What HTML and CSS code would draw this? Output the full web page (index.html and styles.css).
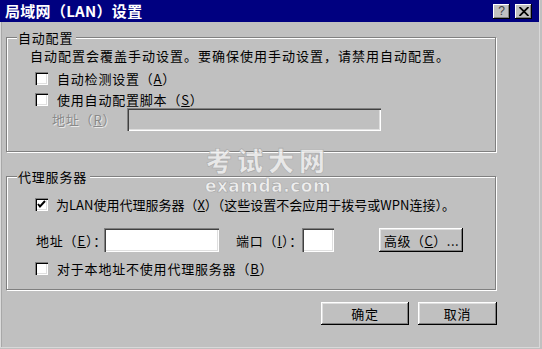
FILE: index.html
```html
<!DOCTYPE html>
<html lang="zh-CN">
<head>
<meta charset="utf-8">
<title>局域网（LAN）设置</title>
<link rel="stylesheet" href="styles.css">
</head>
<body>
<div class="window">
  <div class="titlebar">
    <span class="title">局域网（LAN）设置</span>
    <div class="tbtns">
      <span class="tbtn help">?</span>
      <span class="tbtn close">
        <svg width="10" height="9" viewBox="0 0 10 9"><path d="M0.5 0 L9.5 9 M9.5 0 L0.5 9" stroke="#000" stroke-width="1.8" fill="none"/></svg>
      </span>
    </div>
  </div>
  <div class="content">
    <div class="group g1">
      <span class="legend">自动配置</span>
      <div class="row desc">自动配置会覆盖手动设置。要确保使用手动设置，请禁用自动配置。</div>
      <div class="row cb1"><span class="cb"></span><span class="lbl">自动检测设置（<u>A</u>）</span></div>
      <div class="row cb2"><span class="cb"></span><span class="lbl">使用自动配置脚本（<u>S</u>）</span></div>
      <div class="row addr1"><span class="dis">地址（<u>R</u>）</span><span class="field disabled"></span></div>
    </div>
    <div class="group g2">
      <span class="legend">代理服务器</span>
      <div class="row cbx"><span class="cb checked"><svg width="9" height="9" viewBox="0 0 9 9"><path d="M1 4 L3 6.5 L8 1" stroke="#000" stroke-width="2" fill="none"/></svg></span><span class="lbl">为LAN使用代理服务器（<u>X</u>）（这些设置不会应用于拨号或WPN连接）。</span></div>
      <div class="row addr2">
        <span class="l1">地址（<u>E</u>）：</span><span class="field f-addr"></span>
        <span class="l2">端口（<u>I</u>）：</span><span class="field f-port"></span>
        <span class="btn adv">高级（<u>C</u>）...</span>
      </div>
      <div class="row cb3"><span class="cb"></span><span class="lbl">对于本地址不使用代理服务器（<u>B</u>）</span></div>
    </div>
    <div class="buttons">
      <span class="btn ok">确定</span>
      <span class="btn cancel">取消</span>
    </div>
  </div>
  <div class="watermark">
    <span class="wm1">考试大网</span>
    <span class="wm2">examda.com</span>
  </div>
</div>
</body>
</html>
```
FILE: styles.css
```css
html, body {
  margin: 0;
  padding: 0;
  background: #c0c0c0;
}
body {
  width: 542px;
  height: 349px;
  overflow: hidden;
  font-family: "Noto Sans CJK SC", "DejaVu Sans", sans-serif;
  font-size: 13px;
  color: #000;
}
.window {
  position: relative;
  width: 540px;
  height: 348px;
  box-sizing: border-box;
  background: #c0c0c0;
  border-right: 1px solid #d8d8d8;
  border-bottom: 1px solid #d8d8d8;
  box-shadow: inset 1px 0 0 #dcdcdc, inset 2px 0 0 #a8a8a8;
  display: flex;
  flex-direction: column;
}
.titlebar {
  height: 22px;
  background: #000080;
  display: flex;
  align-items: center;
  justify-content: space-between;
  padding: 0 7px 0 5px;
}
.title {
  color: #fff;
  font-weight: bold;
  font-size: 15px;
  letter-spacing: 0.3px;
  line-height: 22px;
}
.tbtns {
  display: flex;
  gap: 5px;
  align-items: center;
}
.tbtn {
  width: 17px;
  height: 15px;
  background: #c0c0c0;
  box-sizing: border-box;
  box-shadow: inset -1px -1px 0 #000, inset 1px 1px 0 #fff, inset -2px -2px 0 #808080;
  display: flex;
  align-items: center;
  justify-content: center;
  font-family: "Liberation Sans", sans-serif;
  font-size: 12px;
  line-height: 15px;
  color: #404040;
}
.content {
  padding: 15px 0 0 6px;
  display: flex;
  flex-direction: column;
}
.group {
  width: 490px;
  box-sizing: border-box;
  border: 1px solid #808080;
  box-shadow: 1px 1px 0 #fff, inset 1px 1px 0 #fff;
  display: flex;
  flex-direction: column;
  letter-spacing: 0.8px;
}
.g1 { height: 115px; }
.g2 { height: 114px; margin-top: 24px; }
.legend {
  align-self: flex-start;
  margin: -8px 0 0 10px;
  padding: 0 3px 0 1px;
  line-height: 15px;
  background: #c0c0c0;
}
.row {
  display: flex;
  align-items: center;
  height: 20px;
  white-space: nowrap;
}
.desc { padding-left: 23px; letter-spacing: 1px; }
.cb1 { margin-top: 3px; }
.cb2 { margin-top: 1px; }
.cb1, .cb2, .cbx, .cb3 { padding-left: 28px; }
.cb {
  width: 13px;
  height: 13px;
  box-sizing: border-box;
  background: #fff;
  box-shadow: inset 1px 1px 0 #808080, inset 2px 2px 0 #000, inset -1px -1px 0 #fff, inset -2px -2px 0 #dfdfdf;
  display: flex;
  align-items: center;
  justify-content: center;
  flex: none;
}
.lbl { margin-left: 9px; line-height: 15px; }
.addr1 {
  height: 23px;
  margin-top: -1px;
  padding-left: 45px;
}
.dis {
  color: #8a8a8a;
  text-shadow: 1px 1px 0 #e8e8e8;
  width: 75px;
}
.field {
  height: 23px;
  box-sizing: border-box;
  background: #fff;
  box-shadow: inset 1px 1px 0 #808080, inset 2px 2px 0 #404040, inset -1px -1px 0 #fff, inset -2px -2px 0 #dfdfdf;
  flex: none;
}
.field.disabled {
  width: 254px;
  background: #c0c0c0;
}
.cbx { margin-top: 10px; }
.cbx .lbl { margin-left: 8px; letter-spacing: 0px; }
.addr2 {
  height: 24px;
  margin-top: 14px;
  padding-left: 29px;
}
.addr2 .field { height: 24px; }
.l1 { width: 68px; }
.f-addr { width: 115px; }
.l2 { margin-left: 17px; width: 66px; }
.f-port { width: 32px; }
.btn {
  height: 24px;
  box-sizing: border-box;
  background: #c0c0c0;
  box-shadow: inset -1px -1px 0 #000, inset 1px 1px 0 #fff, inset -2px -2px 0 #808080, inset 2px 2px 0 #dfdfdf;
  display: flex;
  align-items: center;
  justify-content: center;
  flex: none;
}
.adv {
  width: 84px;
  margin-left: 45px;
  justify-content: flex-start;
  padding-left: 5px;
  letter-spacing: 0.5px;
}
.cb3 { margin-top: 6px; }
.buttons {
  display: flex;
  gap: 9px;
  width: 491px;
  justify-content: flex-end;
  margin-top: 12px;
  letter-spacing: 0.8px;
}
.ok { width: 88px; height: 23px; }
.cancel { width: 79px; height: 23px; }
.watermark {
  position: absolute;
  left: 203px;
  top: 146px;
  width: 130px;
  display: flex;
  flex-direction: column;
  align-items: center;
  gap: 5px;
  pointer-events: none;
}
.wm1 {
  font-family: "Noto Sans CJK SC", sans-serif;
  font-weight: 900;
  font-size: 26px;
  line-height: 28px;
  letter-spacing: 5px;
  color: rgba(240, 240, 240, 0.85);
  -webkit-text-stroke: 0.6px #a8a8a8;
}
.wm2 {
  font-family: "DejaVu Sans", sans-serif;
  font-weight: bold;
  font-size: 17px;
  line-height: 14px;
  letter-spacing: 0.5px;
  color: rgba(245, 245, 245, 0.9);
  -webkit-text-stroke: 0.5px #a0a0a0;
}
```
